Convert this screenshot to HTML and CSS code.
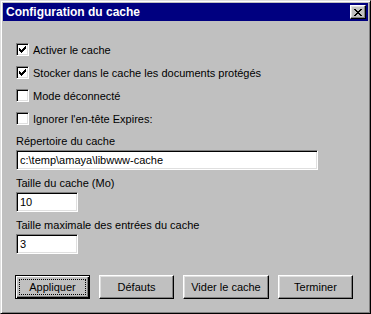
FILE: index.html
```html
<!DOCTYPE html>
<html>
<head>
<meta charset="utf-8">
<link rel="stylesheet" href="styles.css">
</head>
<body>
<div class="window">
  <div class="titlebar">
    <span class="title">Configuration du cache</span>
    <span class="close">
      <svg width="8" height="7" viewBox="0 0 8 7" shape-rendering="crispEdges"><path d="M0 0h2v1h-2zM6 0h2v1h-2zM1 1h2v1h-2zM5 1h2v1h-2zM2 2h4v1h-4zM3 3h2v1h-2zM2 4h4v1h-4zM1 5h2v1h-2zM5 5h2v1h-2zM0 6h2v1h-2zM6 6h2v1h-2z" fill="#000"/></svg>
    </span>
  </div>
  <div class="content">
    <div class="checks">
      <div class="check"><span class="box"><svg width="7" height="7" viewBox="0 0 7 7" shape-rendering="crispEdges"><path d="M6 0h1v3h-1zM5 1h1v3h-1zM4 2h1v3h-1zM3 3h1v3h-1zM2 4h1v3h-1zM1 3h1v3h-1zM0 2h1v3h-1z" fill="#000"/></svg></span><span>Activer le cache</span></div>
      <div class="check"><span class="box"><svg width="7" height="7" viewBox="0 0 7 7" shape-rendering="crispEdges"><path d="M6 0h1v3h-1zM5 1h1v3h-1zM4 2h1v3h-1zM3 3h1v3h-1zM2 4h1v3h-1zM1 3h1v3h-1zM0 2h1v3h-1z" fill="#000"/></svg></span><span>Stocker dans le cache les documents protégés</span></div>
      <div class="check"><span class="box"></span><span>Mode déconnecté</span></div>
      <div class="check"><span class="box"></span><span>Ignorer l'en-tête Expires:</span></div>
    </div>
    <div class="field">
      <div class="label">Répertoire du cache</div>
      <div class="input wide">c:\temp\amaya\libwww-cache</div>
    </div>
    <div class="field">
      <div class="label">Taille du cache (Mo)</div>
      <div class="input small">10</div>
    </div>
    <div class="field">
      <div class="label">Taille maximale des entrées du cache</div>
      <div class="input small">3</div>
    </div>
    <div class="buttons">
      <div class="btn default"><span class="focus">Appliquer</span></div>
      <div class="btn">Défauts</div>
      <div class="btn btn-wide">Vider le cache</div>
      <div class="btn">Terminer</div>
    </div>
  </div>
</div>
</body>
</html>
```
FILE: styles.css
```css
html, body {
  margin: 0;
  padding: 0;
  background: #c0c0c0;
}
.window {
  width: 371px;
  height: 314px;
  box-sizing: border-box;
  background: #c0c0c0;
  border: 1px solid;
  border-color: #dfdfdf #000 #000 #dfdfdf;
  box-shadow: inset 1px 1px #fff, inset -1px -1px #808080;
  padding: 2px;
  font-family: "Liberation Sans", Arial, sans-serif;
  font-size: 11px;
  color: #000;
}
.titlebar {
  height: 18px;
  background: #000080;
  display: flex;
  align-items: center;
  justify-content: space-between;
  padding: 0 2px 0 3px;
}
.title {
  color: #fff;
  font-weight: bold;
  font-size: 12px;
}
.close {
  width: 16px;
  height: 14px;
  box-sizing: border-box;
  background: #c0c0c0;
  border: 1px solid;
  border-color: #fff #000 #000 #fff;
  box-shadow: inset -1px -1px #808080, inset 1px 1px #dfdfdf;
  display: flex;
  align-items: center;
  justify-content: center;
}
.close svg { display: block; }
.content {
  padding: 22px 0 0 13px;
}
.checks {
  display: flex;
  flex-direction: column;
  gap: 10px;
}
.check {
  display: flex;
  align-items: center;
  gap: 4px;
  height: 13px;
}
.box {
  width: 13px;
  height: 13px;
  box-sizing: border-box;
  background: #fff;
  border: 1px solid;
  border-color: #808080 #fff #fff #808080;
  box-shadow: inset 1px 1px #000, inset -1px -1px #dfdfdf;
  display: flex;
  align-items: center;
  justify-content: center;
  flex: none;
}
.box svg { display: block; }
.field {
  margin-top: 9px;
}
.field + .field { margin-top: 6px; }
.label {
  line-height: 14px;
  margin-bottom: 2px;
}
.input {
  height: 20px;
  box-sizing: border-box;
  background: #fff;
  border: 1px solid;
  border-color: #808080 #fff #fff #808080;
  box-shadow: inset 1px 1px #000, inset -1px -1px #dfdfdf;
  padding: 0 3px;
  line-height: 18px;
}
.wide { width: 302px; }
.small { width: 62px; }
.buttons {
  display: flex;
  gap: 9px;
  margin-top: 21px;
  margin-left: -1px;
}
.btn {
  width: 75px;
  height: 24px;
  box-sizing: border-box;
  border: 1px solid;
  border-color: #fff #000 #000 #fff;
  box-shadow: inset -1px -1px #808080, inset 1px 1px #dfdfdf;
  display: flex;
  align-items: center;
  justify-content: center;
}
.btn-wide { width: 86px; }
.btn.default {
  border: 1px solid #000;
  box-shadow: inset 1px 1px #fff, inset -1px -1px #000, inset -2px -2px #808080;
}
.focus {
  border: 1px dotted #000;
  width: 67px;
  height: 16px;
  box-sizing: border-box;
  display: flex;
  align-items: center;
  justify-content: center;
}
```
